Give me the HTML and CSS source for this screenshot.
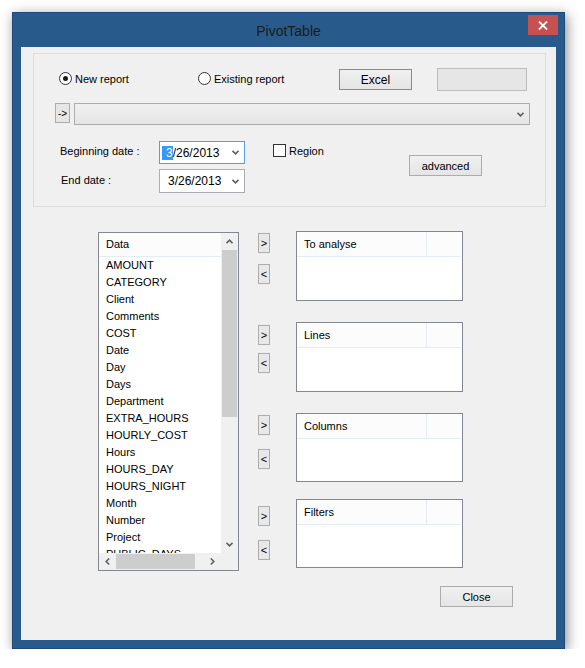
FILE: index.html
```html
<!DOCTYPE html>
<html lang="en">

<head>
    <meta charset="UTF-8">
    <meta name="viewport" content="width=device-width, initial-scale=1.0">
    <title>PivotTable</title>
    <link rel="stylesheet" href="styles.css">
</head>

<body>
    <div class="window">
        <div class="titlebar">
            <span class="title">PivotTable</span>
            <span class="close">
                <svg width="10" height="9" viewBox="0 0 10 9"><path d="M1 0.5 L9 8.5 M9 0.5 L1 8.5" stroke="#fff" stroke-width="1.8"/></svg>
            </span>
        </div>

        <div class="client">
            <!-- report options -->
            <div class="group">
                <div class="row-report">
                    <label class="radio r-new"><span class="dot checked"></span>New report</label>
                    <label class="radio r-exist"><span class="dot"></span>Existing report</label>
                    <button class="btn btn-excel">Excel</button>
                    <button class="btn btn-blank" disabled></button>
                </div>
                <div class="row-path">
                    <button class="btn btn-go">-&gt;</button>
                    <div class="combo">
                        <svg class="chev" width="7" height="5" viewBox="0 0 7 5"><path d="M0.5 0.8 L3.5 3.8 L6.5 0.8" fill="none" stroke="#606060" stroke-width="1.6"/></svg>
                    </div>
                </div>
                <div class="dates">
                    <span class="lbl lbl-begin">Beginning date :</span>
                    <div class="picker picker-begin focus">
                        <span><span class="sel">3</span>/26/2013</span>
                        <svg class="chev" width="7" height="5" viewBox="0 0 7 5"><path d="M0.5 0.8 L3.5 3.8 L6.5 0.8" fill="none" stroke="#606060" stroke-width="1.6"/></svg>
                    </div>
                    <label class="check"><span class="box"></span>Region</label>
                    <button class="btn btn-adv">advanced</button>
                    <span class="lbl lbl-end">End date :</span>
                    <div class="picker picker-end">
                        <span>3/26/2013</span>
                        <svg class="chev" width="7" height="5" viewBox="0 0 7 5"><path d="M0.5 0.8 L3.5 3.8 L6.5 0.8" fill="none" stroke="#606060" stroke-width="1.6"/></svg>
                    </div>
                </div>
            </div>

            <!-- fields / targets -->
            <div class="main">
                <div class="listbox">
                    <div class="list-body">
                        <div class="list-head">Data</div>
                        <div class="item">AMOUNT</div>
                        <div class="item">CATEGORY</div>
                        <div class="item">Client</div>
                        <div class="item">Comments</div>
                        <div class="item">COST</div>
                        <div class="item">Date</div>
                        <div class="item">Day</div>
                        <div class="item">Days</div>
                        <div class="item">Department</div>
                        <div class="item">EXTRA_HOURS</div>
                        <div class="item">HOURLY_COST</div>
                        <div class="item">Hours</div>
                        <div class="item">HOURS_DAY</div>
                        <div class="item">HOURS_NIGHT</div>
                        <div class="item">Month</div>
                        <div class="item">Number</div>
                        <div class="item">Project</div>
                        <div class="item">PUBLIC_DAYS</div>
                    </div>
                    <div class="vscroll">
                        <span class="arrow">
                            <svg width="7" height="5" viewBox="0 0 7 5"><path d="M0.5 4.2 L3.5 1.2 L6.5 4.2" fill="none" stroke="#606060" stroke-width="1.6"/></svg>
                        </span>
                        <span class="vthumb"></span>
                        <span class="vtrack"></span>
                        <span class="arrow">
                            <svg width="7" height="5" viewBox="0 0 7 5"><path d="M0.5 0.8 L3.5 3.8 L6.5 0.8" fill="none" stroke="#606060" stroke-width="1.6"/></svg>
                        </span>
                    </div>
                    <div class="hscroll">
                        <span class="arrow">
                            <svg width="5" height="7" viewBox="0 0 5 7"><path d="M4.2 0.5 L1.2 3.5 L4.2 6.5" fill="none" stroke="#606060" stroke-width="1.6"/></svg>
                        </span>
                        <span class="hthumb"></span>
                        <span class="htrack"></span>
                        <span class="arrow">
                            <svg width="5" height="7" viewBox="0 0 5 7"><path d="M0.8 0.5 L3.8 3.5 L0.8 6.5" fill="none" stroke="#606060" stroke-width="1.6"/></svg>
                        </span>
                    </div>
                    <div class="corner"></div>
                </div>

                <div class="movers">
                    <button class="btn mv mv1">&gt;</button>
                    <button class="btn mv mv2">&lt;</button>
                    <button class="btn mv mv3">&gt;</button>
                    <button class="btn mv mv4">&lt;</button>
                    <button class="btn mv mv5">&gt;</button>
                    <button class="btn mv mv6">&lt;</button>
                    <button class="btn mv mv7">&gt;</button>
                    <button class="btn mv mv8">&lt;</button>
                </div>

                <div class="targets">
                    <div class="panel p-analyse">
                        <div class="panel-head"><span class="col">To analyse</span><span class="col-rest"></span></div>
                    </div>
                    <div class="panel p-lines">
                        <div class="panel-head"><span class="col">Lines</span><span class="col-rest"></span></div>
                    </div>
                    <div class="panel p-columns">
                        <div class="panel-head"><span class="col">Columns</span><span class="col-rest"></span></div>
                    </div>
                    <div class="panel p-filters">
                        <div class="panel-head"><span class="col">Filters</span><span class="col-rest"></span></div>
                    </div>
                </div>
            </div>

            <div class="footer">
                <button class="btn btn-close">Close</button>
            </div>
        </div>
    </div>
</body>

</html>
```

FILE: styles.css
```css
body {
    margin: 0;
    background: #fff;
    font-family: "Liberation Sans", Arial, sans-serif;
    font-size: 11px;
    color: #000;
}

.window {
    position: relative;
    width: 553px;
    margin: 12px 0 0 12px;
    padding: 0 8px 8px;
    box-sizing: border-box;
    background: #285b8b;
    border: 1px solid #1d4a77;
    box-shadow: 2px 3px 12px rgba(0, 0, 0, 0.45);
}

.titlebar {
    height: 34px;
    display: flex;
    align-items: center;
    justify-content: center;
}

.title {
    font-size: 14px;
    color: #1a1a1a;
    margin-top: 2px;
}

.close {
    position: absolute;
    top: 2px;
    right: 6px;
    width: 30px;
    height: 20px;
    background: #c75050;
    display: flex;
    align-items: center;
    justify-content: center;
}

.client {
    height: 593px;
    background: #f0f0f0;
    padding-top: 6px;
    box-sizing: border-box;
}

/* ---- buttons ---- */
.btn {
    font-family: inherit;
    font-size: 11px;
    color: #000;
    padding: 0;
    background: linear-gradient(#f0f0f0, #e5e5e5);
    border: 1px solid #acacac;
    box-sizing: border-box;
    cursor: pointer;
}

/* ---- group box ---- */
.group {
    margin: 0 10px 0 12px;
    height: 154px;
    padding-top: 14px;
    box-sizing: border-box;
    border: 1px solid #dcdcdc;
}

.row-report {
    display: flex;
    align-items: flex-start;
    height: 23px;
}

.radio {
    display: flex;
    align-items: center;
    height: 13px;
    margin-top: 4px;
}

.r-new {
    margin-left: 25px;
    width: 139px;
}

.r-exist {
    width: 141px;
}

.dot {
    width: 13px;
    height: 13px;
    margin-right: 3px;
    border: 1px solid #333;
    border-radius: 50%;
    background: #fff;
    box-sizing: border-box;
    display: flex;
    align-items: center;
    justify-content: center;
}

.dot.checked::after {
    content: "";
    width: 5px;
    height: 5px;
    border-radius: 50%;
    background: #1a1a1a;
}

.btn-excel {
    width: 73px;
    height: 21px;
    margin-top: 1px;
    border-color: #3c9bff;
    font-size: 12px;
}

.btn-blank {
    width: 90px;
    height: 23px;
    margin-left: 25px;
    background: #e6e6e6;
    border-color: #bcbcbc;
}

.row-path {
    display: flex;
    margin-top: 12px;
}

.btn-go {
    width: 15px;
    height: 20px;
    margin-left: 21px;
    font-size: 10px;
    background: #e6e6e6;
}

.combo {
    width: 456px;
    height: 22px;
    margin-left: 4px;
    box-sizing: border-box;
    border: 1px solid #acacac;
    background: linear-gradient(#f0f0f0, #e5e5e5);
    display: flex;
    align-items: center;
    justify-content: flex-end;
    padding-right: 5px;
}

.dates {
    display: grid;
    grid-template-columns: 99px 86px 28px 136px 73px;
    grid-template-rows: 23px 24px;
    row-gap: 5px;
    margin-top: 16px;
    padding-left: 26px;
}

.lbl {
    grid-column: 1;
    align-self: center;
    margin-top: -3px;
}

.lbl-begin {
    grid-row: 1;
}

.lbl-end {
    grid-row: 2;
    margin-left: 1px;
}

.picker {
    grid-column: 2;
    display: flex;
    align-items: center;
    justify-content: space-between;
    padding: 0 5px 0 8px;
    background: #fff;
    border: 1px solid #abadb3;
    box-sizing: border-box;
    font-size: 12px;
}

.picker-begin {
    grid-row: 1;
}

.picker-end {
    grid-row: 2;
}

.picker.focus {
    border-color: #569de5;
}

.sel {
    background: #3399ff;
    color: #fff;
    margin-left: -6px;
    padding-left: 4px;
}

.check {
    grid-column: 4;
    grid-row: 1;
    display: flex;
    align-items: center;
    align-self: start;
    height: 13px;
    margin-top: 3px;
}

.box {
    width: 13px;
    height: 13px;
    margin-right: 3px;
    border: 1px solid #333;
    background: #fff;
    box-sizing: border-box;
}

.btn-adv {
    grid-column: 5;
    grid-row: 1 / 3;
    align-self: start;
    height: 21px;
    margin-top: 14px;
}

/* ---- main area ---- */
.main {
    display: flex;
    align-items: flex-start;
    margin-top: 24px;
    padding-left: 77px;
    height: 340px;
}

.listbox {
    width: 141px;
    height: 339px;
    margin-top: 1px;
    box-sizing: border-box;
    border: 1px solid #828790;
    background: #fff;
    display: grid;
    grid-template-columns: 1fr 17px;
    grid-template-rows: 1fr 17px;
}

.list-body {
    overflow: hidden;
}

.list-head {
    height: 24px;
    line-height: 23px;
    padding-left: 7px;
    box-sizing: border-box;
    background: #fcfcfc;
    border-bottom: 1px solid #e3ecf8;
}

.item {
    height: 17px;
    line-height: 17px;
    padding-left: 7px;
    white-space: nowrap;
}

.vscroll {
    display: flex;
    flex-direction: column;
    background: #f0f0f0;
}

.vscroll .arrow {
    height: 17px;
}

.arrow {
    display: flex;
    align-items: center;
    justify-content: center;
    flex-shrink: 0;
}

.vthumb {
    height: 167px;
    margin: 0 1px;
    background: #cdcdcd;
}

.vtrack {
    flex: 1;
}

.hscroll {
    display: flex;
    background: #f0f0f0;
}

.hscroll .arrow {
    width: 17px;
}

.hthumb {
    width: 79px;
    margin: 1px 0;
    background: #cdcdcd;
}

.htrack {
    flex: 1;
}

.corner {
    background: #f0f0f0;
}

.movers {
    display: flex;
    flex-direction: column;
    margin-left: 19px;
    width: 12px;
}

.mv {
    width: 12px;
    height: 20px;
    font-size: 11px;
    line-height: 18px;
    background: #e8e8e8;
}

.mv1 { margin-top: 2px; }
.mv2 { margin-top: 11px; }
.mv3 { margin-top: 41px; }
.mv4 { margin-top: 8px; }
.mv5 { margin-top: 42px; }
.mv6 { margin-top: 14px; }
.mv7 { margin-top: 37px; }
.mv8 { margin-top: 14px; }

.targets {
    display: flex;
    flex-direction: column;
    margin-left: 26px;
    width: 167px;
}

.panel {
    height: 70px;
    box-sizing: border-box;
    border: 1px solid #828790;
    background: #fff;
}

.p-lines { margin-top: 21px; }
.p-columns { margin-top: 21px; height: 69px; }
.p-filters { margin-top: 17px; height: 69px; }

.panel-head {
    display: flex;
    height: 25px;
    margin-right: 1px;
    box-sizing: border-box;
    background: #fcfcfc;
    border-bottom: 1px solid #e3ecf8;
}

.panel-head .col {
    width: 130px;
    padding-left: 7px;
    line-height: 24px;
    box-sizing: border-box;
    border-right: 1px solid #e3ecf8;
}

.footer {
    display: flex;
    justify-content: flex-end;
    margin-top: 15px;
    padding-right: 43px;
}

.btn-close {
    width: 73px;
    height: 21px;
}
```
